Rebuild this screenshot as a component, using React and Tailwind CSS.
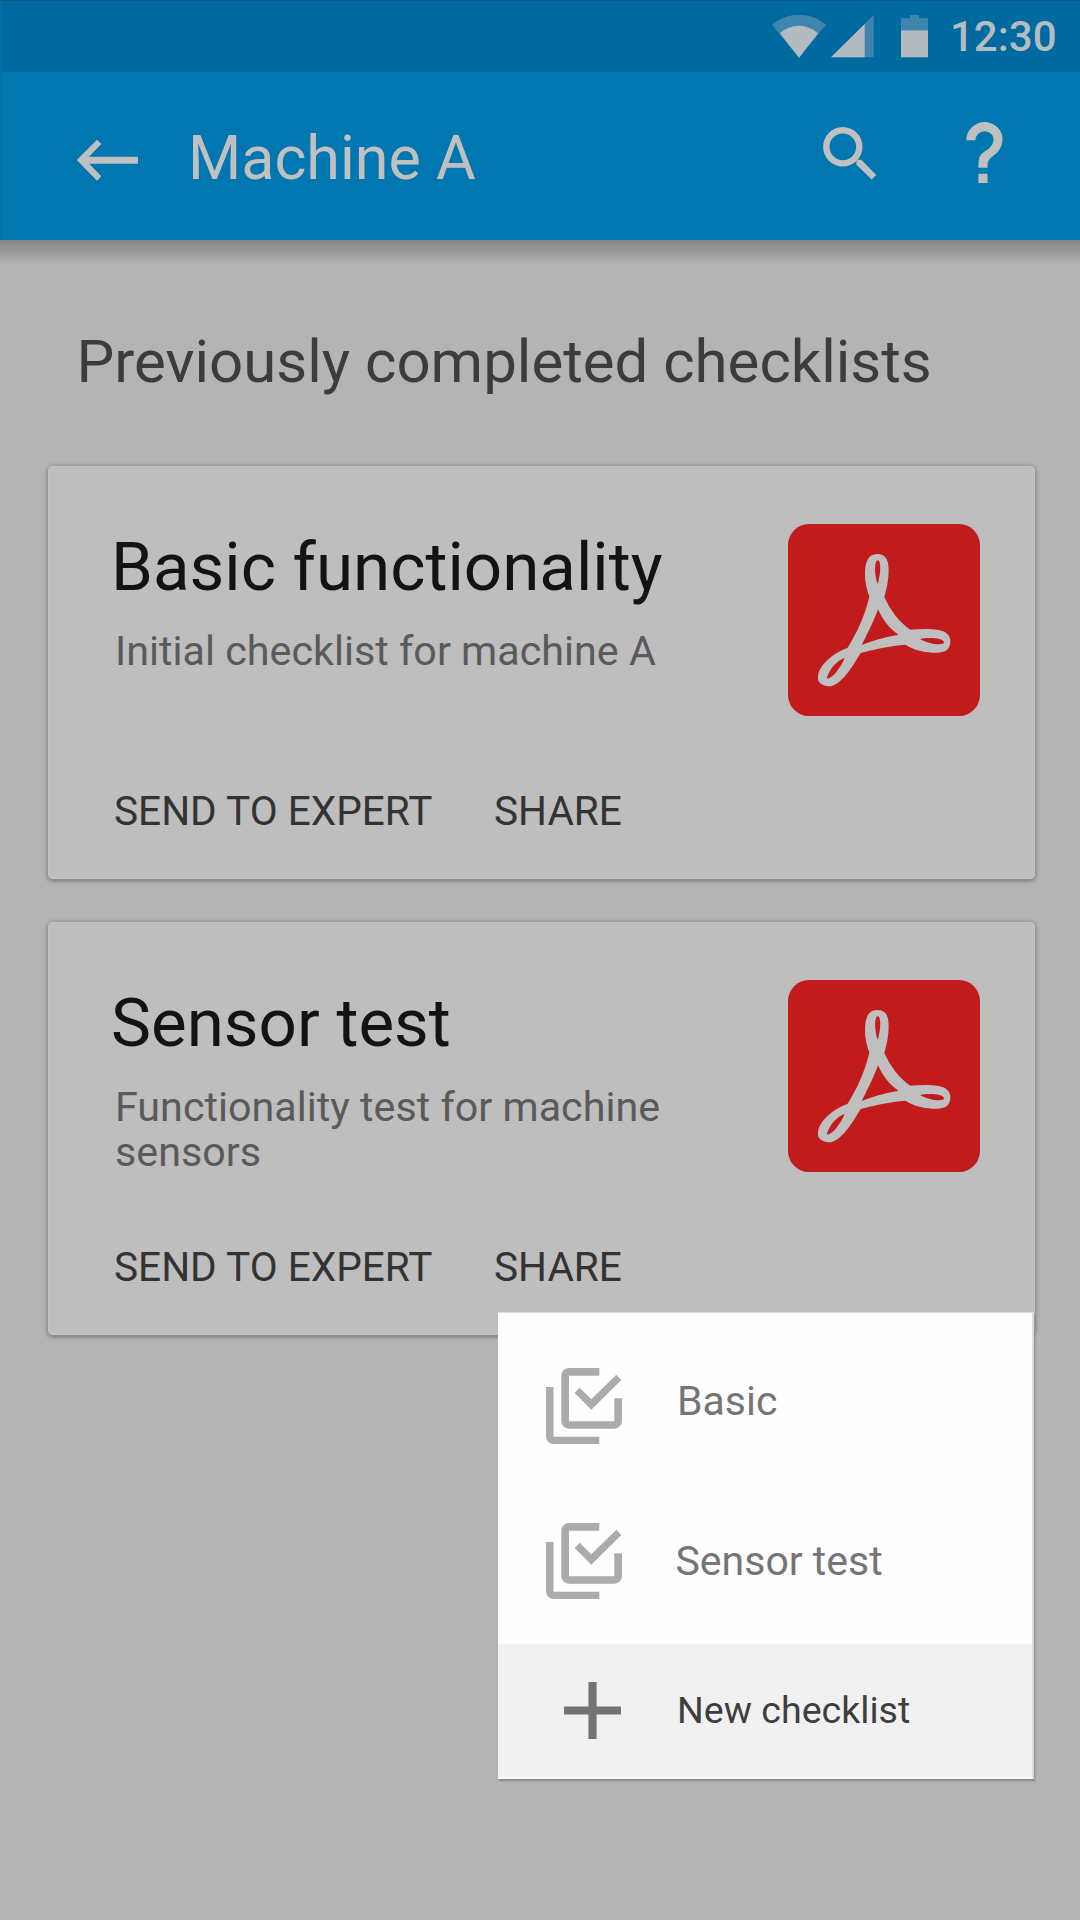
const checklists = [
  { title: "Basic functionality", description: "Initial checklist for machine A" },
  { title: "Sensor test", description: "Functionality test for machine sensors" },
];

function StatusBar() {
  return (
    <div className="flex h-[72px] items-center justify-end border-t border-[#005b8b] bg-[#0069a0] pr-[24px] shadow-[inset_2px_0_0_#0072ab]">
      <svg className="mr-[5px] mt-[-1px] h-[43px] w-[54px]" viewBox="0 0 54 43">
        <path d="M27 42.7L0 9.7Q12-.2 27-.2T54 9.7z" fill="#4085ad" />
        <path d="M27 42.7L7.9 18.3Q16.5 10.8 27 10.8t19.1 7.5z" fill="#b3bbc0" />
      </svg>
      <svg className="mr-[27px] mt-[-1px] h-[43px] w-[43px]" viewBox="0 0 43 43">
        <path d="M0 42.3L42.7 0v42.3z" fill="#4085ad" />
        <path d="M0 42.3L33.7 9v33.3z" fill="#b3bbc0" />
      </svg>
      <svg className="mr-[22px] mt-[-1px] h-[43px] w-[27px]" viewBox="0 0 27 43">
        <path d="M0 3.3h9V0h9v3.3h9V15.5H0z" fill="#4085ad" />
        <path d="M0 15.3h27v27H0z" fill="#b3bbc0" />
      </svg>
      <span className="w-[106px] whitespace-nowrap text-[42px] font-medium leading-[72px] text-[#b3bcc1]">12:30</span>
    </div>
  );
}

function AppBar() {
  return (
    <header className="flex h-[168px] items-start bg-[#0077b0] pl-[76px] text-[#c0c0c0] shadow-[inset_2px_0_0_#0072ab]">
      <svg className="mt-[67px] h-[42px] w-[62px]" viewBox="0 0 62 42" fill="currentColor">
        <path d="M.7 21L21 .7 25.3 5 13 17.7h49v7H13.3L25.3 37.3 21 41.7z" />
      </svg>
      <h1 className="ml-[50px] mt-[50px] flex-1 whitespace-nowrap text-[61px] leading-[72px]">Machine A</h1>
      <svg className="mt-[45.6px] h-[72.8px] w-[72.8px]" viewBox="0 0 24 24" fill="currentColor">
        <path
          fillRule="evenodd"
          d="M9.5 3a6.5 6.5 0 1 0 0 13 6.5 6.5 0 0 0 0-13zm0 2.1a4.4 4.4 0 1 1 0 8.8 4.4 4.4 0 0 1 0-8.8z"
        />
        <path d="M14 14.3l.5-.5h1.1l4.9 5-1.5 1.5-5-4.9z" />
      </svg>
      <svg className="ml-[61px] mr-[59px] mt-[44px] h-[73px] w-[73px]" viewBox="0 0 24 24" fill="currentColor">
        <path d="M10 19h3v3h-3v-3zM12 2c5.35.22 7.68 5.62 4.5 9.67-.83 1-2.17 1.66-2.83 2.5C13 15 13 16 13 17h-3c0-1.67 0-3.08.67-4.08.66-1 2-1.59 2.83-2.25C15.92 8.43 15.32 5.26 12 5a3 3 0 0 0-3 3H6a6 6 0 0 1 6-6z" />
      </svg>
    </header>
  );
}

function PdfIcon() {
  return (
    <svg className="h-[192px] w-[192px] shrink-0" viewBox="54 57 576 576">
      <rect x="54" y="57" width="576" height="576" rx="63" fill="#c11b1b" />
      <path
        fill="#bfbfbf"
        fillRule="evenodd"
        d="M298 275C290 252 285 232 285 207C285 174 293 147 321 147C350 147 356 168 356 197C356 225 350 250 343 276C360 315 388 352 421 374C450 371 480 371 502 374C528 378 541 390 541 409C541 431 530 443 500 443C465 443 430 435 407 419C360 423 310 433 272 444C245 490 210 544 177 544C165 544 156 540 147 531C144 528 144 522 144 516C144 485 185 445 233 428C262 380 284 333 298 275ZM324 313C313 345 292 387 275 420C310 406 345 396 385 389C355 368 338 343 324 313ZM323 237C312 205 314 166 323 166C334 166 333 205 323 237ZM450 402C475 396 522 399 522 412C522 424 470 416 450 402ZM224 458C195 468 171 505 171 521C185 521 212 490 224 458Z"
      />
    </svg>
  );
}

function ChecklistCard({ title, description }) {
  return (
    <article className="flex h-[413px] w-[987px] justify-between rounded-[5px] bg-[#bebebe] pl-[63px] pr-[55px] shadow-[0_2px_4px_#808080,0_0_5px_#8c8c8c,inset_0_0_1px_1px_#c3c3c3]">
      <div className="w-[600px] pt-[61px]">
        <h3 className="whitespace-nowrap text-[67.3px] leading-[80px] text-[#131313]">{title}</h3>
        <p className="ml-[4px] mt-[22px] h-[90px] w-[560px] text-[41.25px] leading-[45px] text-[#5a5a5a]">{description}</p>
        <div className="ml-[3px] mt-[68px] flex text-[40.6px] leading-[48px] text-[#333333]">
          <button className="w-[380px] text-left">SEND TO EXPERT</button>
          <button className="text-left">SHARE</button>
        </div>
      </div>
      <div className="pt-[58px]">
        <PdfIcon />
      </div>
    </article>
  );
}

function ChecklistIcon() {
  return (
    <svg className="ml-[47.5px] mt-[55px] h-[76px] w-[76px]" viewBox="0 0 76 76" fill="#a9abac">
      <path d="M53.3 0v7.7H23v45.6h45.3v-23H76v23a7.6 7.6 0 0 1-7.6 7.4H23a7.6 7.6 0 0 1-7.7-7.4V7.7A7.6 7.6 0 0 1 23 0z" />
      <path d="M0 19h7.5v49.7h45.8V76H7.5A7.5 7.5 0 0 1 0 68.5z" />
      <path d="M28.7 25l5-5.3 11.6 11.6 25-24.6 5 5.3-30 29.7z" />
    </svg>
  );
}

function Menu() {
  return (
    <div className="absolute left-[498px] top-[1312px] w-[536px] overflow-hidden border-r-2 border-t border-[#dedede] bg-[#fefefe] text-[41px] leading-[48px] text-[#757575] shadow-[1px_2px_2px_#858585]">
      <div className="flex h-[155px]">
        <ChecklistIcon />
        <span className="ml-[55.5px] mt-[64px]">Basic</span>
      </div>
      <div className="flex h-[176px]">
        <ChecklistIcon />
        <span className="ml-[54px] mt-[69px]">Sensor test</span>
      </div>
      <div className="flex h-[135px] border-b-2 border-[#fafafa] bg-[#f2f1f2]">
        <svg className="ml-[66px] mt-[38px] h-[57px] w-[57px]" viewBox="0 0 57 57" fill="#747474">
          <path d="M24.4 0h8.2v24.4H57v8.2H32.6V57h-8.2V32.6H0v-8.2h24.4z" />
        </svg>
        <span className="ml-[56px] mt-[44px] text-[37.6px] leading-[44px] text-[#3e3e3e]">New checklist</span>
      </div>
    </div>
  );
}

export default function App() {
  return (
    <div className="relative h-[1920px] w-[1080px] overflow-hidden bg-[#b4b4b4] font-['Roboto',sans-serif]">
      <StatusBar />
      <AppBar />
      <div className="h-[26px] bg-linear-to-b from-[#868686] to-[#b4b4b4]" />
      <main className="pl-[48px] pt-[60px]">
        <h2 className="ml-[28.5px] whitespace-nowrap text-[59.95px] leading-[72px] text-[#3c3c3c]">Previously completed checklists</h2>
        <div className="mt-[68px] flex flex-col gap-[43px]">
          {checklists.map((item) => (
            <ChecklistCard key={item.title} {...item} />
          ))}
        </div>
      </main>
      <Menu />
    </div>
  );
}
